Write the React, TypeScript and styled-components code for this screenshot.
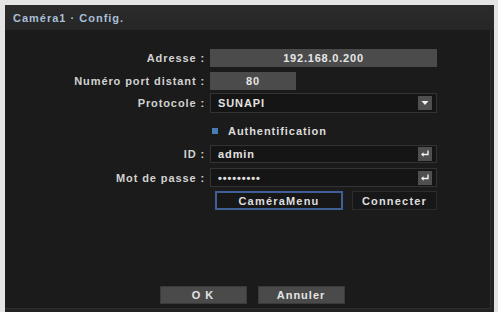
import React from 'react';
import styled, { createGlobalStyle } from 'styled-components';

const GlobalStyle = createGlobalStyle`
  html, body {
    margin: 0;
    padding: 0;
    background: #e4e4e4;
    font-family: 'Liberation Sans', Arial, sans-serif;
  }
`;

const Window = styled.div`
  margin: 5px 0 0 5px;
  width: 489px;
  height: 307px;
  background: #222222;
  display: flex;
  flex-direction: column;
  box-sizing: border-box;
`;

const TitleBar = styled.div`
  height: 25px;
  background: linear-gradient(#2b2b2b, #262626);
  display: flex;
  align-items: center;
  padding-left: 8px;
  color: #a9bfd8;
  font-size: 11px;
  font-weight: 700;
  letter-spacing: 1px;
`;

const Body = styled.div`
  flex: 1;
  background: #1b1b1b;
  margin: 0 3px 3px 0;
  border-right: 1px solid #2f2f2f;
  border-bottom: 1px solid #2f2f2f;
  display: flex;
  flex-direction: column;
  padding-top: 19px;
`;

const Row = styled.div<{ $gap?: number; $h: number }>`
  display: grid;
  grid-template-columns: 200px 227px;
  column-gap: 5px;
  height: ${p => p.$h}px;
  margin-top: ${p => p.$gap ?? 0}px;
  align-items: center;
`;

const Label = styled.div`
  text-align: right;
  color: #d2d2d2;
  font-size: 11px;
  font-weight: 700;
  letter-spacing: 0.9px;
  white-space: nowrap;
`;

const GrayField = styled.div<{ $w?: number }>`
  height: 100%;
  width: ${p => (p.$w ? `${p.$w}px` : '100%')};
  background: #4b4b4b;
  color: #e6e6e6;
  font-size: 11px;
  font-weight: 700;
  letter-spacing: 0.8px;
  display: flex;
  align-items: center;
  justify-content: center;
`;

const DarkField = styled.div`
  height: 100%;
  box-sizing: border-box;
  background: #151515;
  border: 1px solid #333333;
  color: #e2e2e2;
  font-size: 11px;
  font-weight: 700;
  letter-spacing: 0.9px;
  display: flex;
  align-items: center;
  justify-content: space-between;
  padding: 0 4px 0 7px;
`;

const IconBox = styled.div`
  width: 14px;
  height: 14px;
  background: #4f4f4f;
  display: flex;
  align-items: center;
  justify-content: center;
`;

const CheckRow = styled.div`
  display: flex;
  align-items: center;
  gap: 10px;
  padding-left: 2px;
  color: #dcdcdc;
  font-size: 11px;
  font-weight: 700;
  letter-spacing: 0.95px;
`;

const Check = styled.div`
  width: 6px;
  height: 6px;
  background: #4a7cb4;
`;

const ButtonPair = styled.div`
  display: flex;
  gap: 9px;
  height: 100%;
  padding-left: 5px;
`;

const SmallButton = styled.div<{ $w: number; $focus?: boolean }>`
  width: ${p => p.$w}px;
  height: 100%;
  box-sizing: border-box;
  background: #171717;
  border: ${p => (p.$focus ? '2px solid #3f5f97' : '1px solid #2c2c2c')};
  color: #dedede;
  font-size: 11px;
  font-weight: 700;
  letter-spacing: 1.2px;
  display: flex;
  align-items: center;
  justify-content: center;
`;

const Footer = styled.div`
  margin-top: auto;
  margin-bottom: 4px;
  display: flex;
  justify-content: center;
  gap: 11px;
  padding-left: 9px;
`;

const FooterButton = styled.div`
  width: 85px;
  height: 16px;
  background: #4a4a4a;
  border: 1px solid #3a3a3a;
  color: #e4e4e4;
  font-size: 11px;
  font-weight: 700;
  letter-spacing: 1px;
  display: flex;
  align-items: center;
  justify-content: center;
`;

const EnterIcon = () => (
  <IconBox>
    <svg width="10" height="10" viewBox="0 0 10 10">
      <path d="M8 1.5 V5.5 H2.5" stroke="#f0f0f0" strokeWidth="1.4" fill="none" />
      <path d="M1 5.5 L3.6 3.2 V7.8 Z" fill="#f0f0f0" />
    </svg>
  </IconBox>
);

const DropIcon = () => (
  <IconBox>
    <svg width="8" height="6" viewBox="0 0 8 6">
      <path d="M0.5 1 H7.5 L4 5 Z" fill="#f2f2f2" />
    </svg>
  </IconBox>
);

export default function App() {
  return (
    <>
      <GlobalStyle />
      <Window>
        <TitleBar>Caméra1 · Config.</TitleBar>
        <Body>
          <Row $h={18}>
            <Label>Adresse :</Label>
            <GrayField>192.168.0.200</GrayField>
          </Row>
          <Row $h={18} $gap={5}>
            <Label>Numéro port distant :</Label>
            <GrayField $w={86}>80</GrayField>
          </Row>
          <Row $h={20} $gap={3}>
            <Label>Protocole :</Label>
            <DarkField>
              SUNAPI
              <DropIcon />
            </DarkField>
          </Row>
          <Row $h={20} $gap={8}>
            <span />
            <CheckRow>
              <Check />
              Authentification
            </CheckRow>
          </Row>
          <Row $h={18} $gap={4}>
            <Label>ID :</Label>
            <DarkField>
              admin
              <EnterIcon />
            </DarkField>
          </Row>
          <Row $h={19} $gap={5}>
            <Label>Mot de passe :</Label>
            <DarkField>
              •••••••••
              <EnterIcon />
            </DarkField>
          </Row>
          <Row $h={19} $gap={4}>
            <span />
            <ButtonPair>
              <SmallButton $w={128} $focus>CaméraMenu</SmallButton>
              <SmallButton $w={85}>Connecter</SmallButton>
            </ButtonPair>
          </Row>
          <Footer>
            <FooterButton>O K</FooterButton>
            <FooterButton>Annuler</FooterButton>
          </Footer>
        </Body>
      </Window>
    </>
  );
}
